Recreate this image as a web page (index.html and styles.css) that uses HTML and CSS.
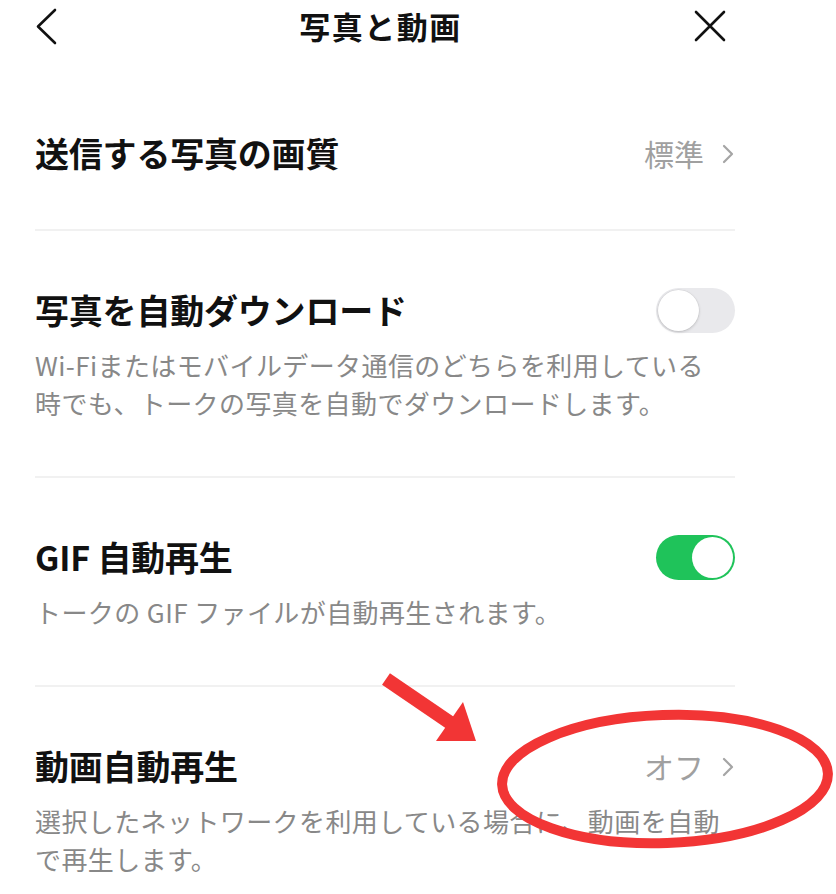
FILE: index.html
```html
<!DOCTYPE html>
<html lang="ja">
<head>
<meta charset="utf-8">
<title>写真と動画</title>
<link rel="stylesheet" href="styles.css">
</head>
<body>
<div class="page">
  <header class="header">
    <svg class="hicon back" width="24" height="40" viewBox="0 0 24 40"><path d="M20 3 L3 19.5 L20 36" fill="none" stroke="#111" stroke-width="2.6" stroke-linecap="round" stroke-linejoin="round"/></svg>
    <h1 class="title">写真と動画</h1>
    <svg class="hicon close" width="32" height="32" viewBox="0 0 32 32"><path d="M2 2 L30 30 M30 2 L2 30" fill="none" stroke="#111" stroke-width="2.6" stroke-linecap="round"/></svg>
  </header>
  <main class="list">
    <section class="row">
      <div class="row-head">
        <span class="row-title">送信する写真の画質</span>
        <span class="value">標準<svg class="chev" width="14" height="22" viewBox="0 0 14 22"><path d="M3 3 L11 11 L3 19" fill="none" stroke="#a5a5a5" stroke-width="2.2" stroke-linecap="round" stroke-linejoin="round"/></svg></span>
      </div>
    </section>
    <section class="row">
      <div class="row-head">
        <span class="row-title">写真を自動ダウンロード</span>
        <span class="toggle"><span class="knob"></span></span>
      </div>
      <p class="desc">Wi-Fiまたはモバイルデータ通信のどちらを利用している時でも、トークの写真を自動でダウンロードします。</p>
    </section>
    <section class="row">
      <div class="row-head">
        <span class="row-title">GIF 自動再生</span>
        <span class="toggle on"><span class="knob"></span></span>
      </div>
      <p class="desc">トークの GIF ファイルが自動再生されます。</p>
    </section>
    <section class="row last">
      <div class="row-head">
        <span class="row-title">動画自動再生</span>
        <span class="value">オフ<svg class="chev" width="14" height="22" viewBox="0 0 14 22"><path d="M3 3 L11 11 L3 19" fill="none" stroke="#a5a5a5" stroke-width="2.2" stroke-linecap="round" stroke-linejoin="round"/></svg></span>
      </div>
      <p class="desc">選択したネットワークを利用している場合に、動画を自動で再生します。</p>
    </section>
  </main>
  <svg class="annot" width="836" height="894" viewBox="0 0 836 894">
    <line x1="386" y1="679" x2="452" y2="724" stroke="#f23535" stroke-width="14"/>
    <polygon points="463,702 436,741 476,741" fill="#f23535"/>
    <ellipse cx="665" cy="779" rx="163" ry="64" fill="none" stroke="#f23535" stroke-width="10" transform="rotate(-2 665 779)"/>
  </svg>
</div>
</body>
</html>
```
FILE: styles.css
```css
* { box-sizing: border-box; }
html, body {
  margin: 0;
  padding: 0;
  background: #fff;
}
body {
  font-family: "Noto Sans CJK JP", "Noto Sans", sans-serif;
  color: #111;
}
.page {
  position: relative;
  width: 836px;
  height: 894px;
  overflow: hidden;
}
.header {
  width: 700px;
  margin-left: 35px;
  height: 52px;
  display: flex;
  align-items: center;
  justify-content: space-between;
}
.hicon { display: block; }
.back { margin-top: 2px; }
.close { margin-right: 9px; }
.title {
  margin: 0;
  font-size: 31px;
  font-weight: 700;
  line-height: 40px;
  letter-spacing: 1.5px;
  margin-left: 8px;
}
.list {
  width: 700px;
  margin-left: 35px;
  padding-top: 22px;
}
.row {
  padding: 57px 0 54px;
  border-bottom: 2px solid #f1f1f1;
}
.row.last { border-bottom: none; }
.row-head {
  display: flex;
  align-items: center;
  justify-content: space-between;
  height: 44px;
}
.row-title {
  font-size: 34px;
  font-weight: 700;
  line-height: 44px;
  letter-spacing: -0.2px;
}
.value {
  display: flex;
  align-items: center;
  gap: 17px;
  font-size: 30px;
  line-height: 44px;
  color: #a0a0a0;
}
.chev { display: block; margin-top: 2px; }
.desc {
  margin: 14px 0 0;
  font-size: 26px;
  line-height: 38px;
  letter-spacing: 0.4px;
  color: #888;
  width: 690px;
}
.toggle {
  position: relative;
  width: 79px;
  height: 45px;
  border-radius: 23px;
  background: #e9e9ec;
  display: block;
}
.toggle .knob {
  position: absolute;
  top: 2px;
  left: 2px;
  width: 41px;
  height: 41px;
  border-radius: 50%;
  background: #fff;
  box-shadow: 0 1px 3px rgba(0,0,0,0.18), 0 0 0 0.5px rgba(0,0,0,0.06);
}
.toggle.on { background: #1fc35a; }
.toggle.on .knob {
  left: 36px;
  box-shadow: none;
}
.annot {
  position: absolute;
  left: 0;
  top: 0;
  pointer-events: none;
}
```
